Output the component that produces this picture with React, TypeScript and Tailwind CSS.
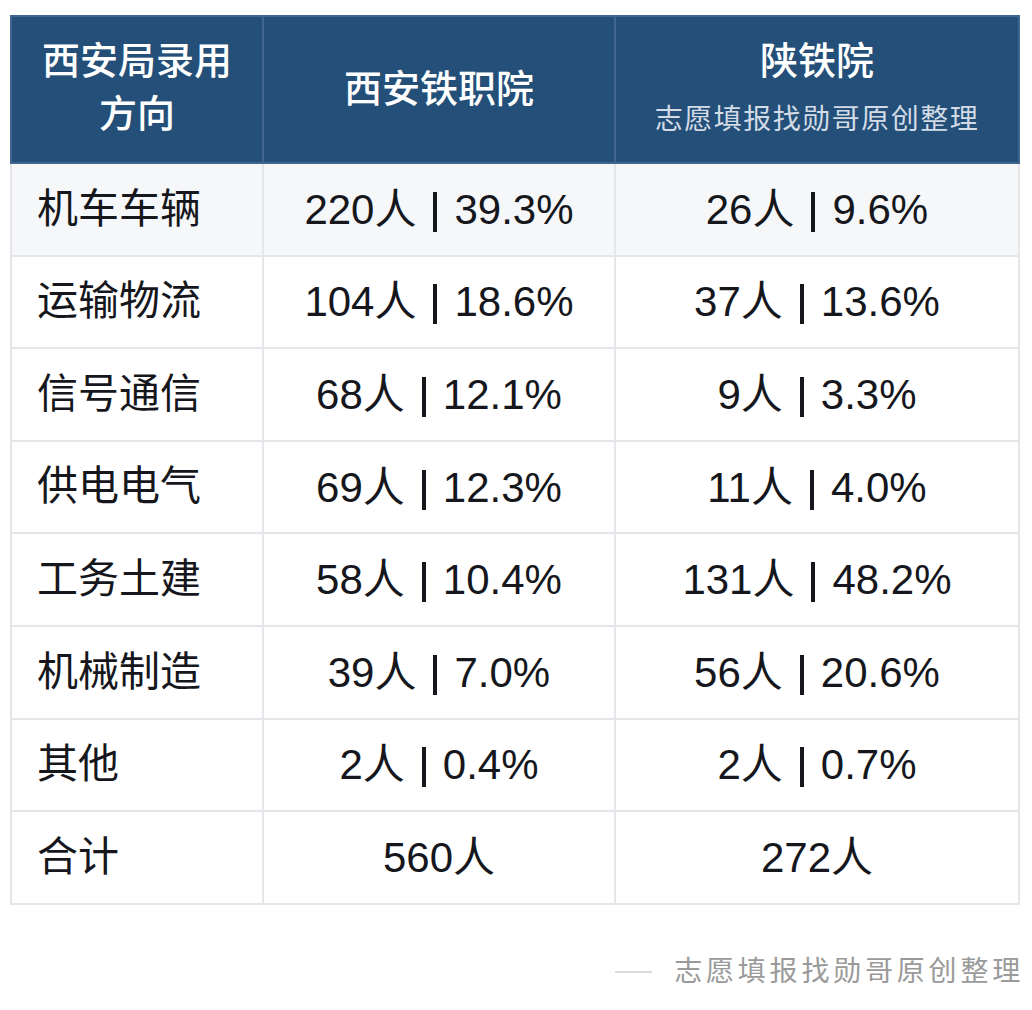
import React from "react";

const rows: [string, string, string][] = [
  ["机车车辆", "220人 | 39.3%", "26人 | 9.6%"],
  ["运输物流", "104人 | 18.6%", "37人 | 13.6%"],
  ["信号通信", "68人 | 12.1%", "9人 | 3.3%"],
  ["供电电气", "69人 | 12.3%", "11人 | 4.0%"],
  ["工务土建", "58人 | 10.4%", "131人 | 48.2%"],
  ["机械制造", "39人 | 7.0%", "56人 | 20.6%"],
  ["其他", "2人 | 0.4%", "2人 | 0.7%"],
  ["合计", "560人", "272人"],
];

function Val({ v }: { v: string }) {
  const parts = v.split(" | ");
  if (parts.length === 1) return <span>{v}</span>;
  return (
    <span>
      {parts[0]}
      <span className="inline-block mx-[17px] w-[4px] h-[40px] bg-[#15171c] align-[-8px]" />
      {parts[1]}
    </span>
  );
}

export default function App() {
  return (
    <div
      className="w-[1032px] h-[1010px] bg-white pt-[15px] pl-[10px]"
      style={{ fontFamily: '"Liberation Sans", "Noto Sans CJK SC", sans-serif' }}
    >
      <table className="border-collapse w-[1008px] table-fixed">
        <colgroup>
          <col className="w-[252px]" />
          <col className="w-[352px]" />
          <col className="w-[404px]" />
        </colgroup>
        <thead>
          <tr className="bg-[#234f79] text-white h-[147px]">
            <th className="border-2 border-[#3f6590] text-[38px] font-medium leading-[53px] text-center align-middle pb-[4px]">
              西安局录用
              <br />
              方向
            </th>
            <th className="border-2 border-[#3f6590] text-[38px] font-medium leading-[53px] text-center align-middle">
              西安铁职院
            </th>
            <th className="border-2 border-[#3f6590] text-center align-middle">
              <div className="text-[38px] font-medium leading-[50px] mt-[-4px]">陕铁院</div>
              <div className="text-[28px] font-normal leading-[40px] mt-[14px] text-[#d3dce6] tracking-[1.5px]">
                志愿填报找勋哥原创整理
              </div>
            </th>
          </tr>
        </thead>
        <tbody>
          {rows.map((r, i) => (
            <tr key={r[0]} className={(i === 0 ? "bg-[#f6f7f9] " : "bg-white ") + "h-[92.6px]"}>
              <td className="border-2 border-[#e5e6ea] pl-[25px] text-[41px] text-[#15171c] align-middle">
                {r[0]}
              </td>
              <td className="border-2 border-[#e5e6ea] text-center text-[42px] text-[#15171c] align-middle">
                <Val v={r[1]} />
              </td>
              <td className="border-2 border-[#e5e6ea] text-center text-[42px] text-[#15171c] align-middle">
                <Val v={r[2]} />
              </td>
            </tr>
          ))}
        </tbody>
      </table>
      <div className="flex items-center justify-end w-[1008px] mt-[47px]">
        <div className="w-[37px] h-[2px] bg-[#dcdcdc] mr-[22px]" />
        <div className="text-[28px] leading-[40px] text-[#9a9a9a] tracking-[3.8px] mr-[-6px]">
          志愿填报找勋哥原创整理
        </div>
      </div>
    </div>
  );
}
